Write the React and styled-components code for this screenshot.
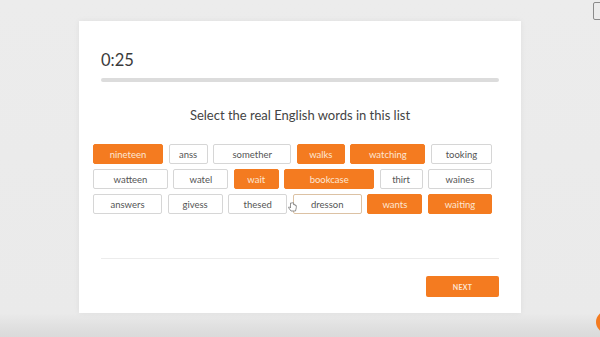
import React from 'react'
import styled, { createGlobalStyle } from 'styled-components'

const GlobalStyle = createGlobalStyle`
  html, body {
    margin: 0;
    padding: 0;
    background: #ebebeb;
  }
  * {
    box-sizing: border-box;
  }
`

const ORANGE = '#f47b20'

const PageStyle = styled.div`
  position: relative;
  width: 600px;
  height: 337px;
  overflow: hidden;
  display: flex;
  flex-direction: column;
  align-items: center;
  padding-top: 21px;
  font-family: Lato, 'Open Sans', sans-serif;
  background: linear-gradient(to bottom, #ececec 0%, #eaeaea 93%, #e0e0e0 97%, #dadada 100%);
`

const CardStyle = styled.div`
  width: 442px;
  height: 292px;
  background: #fff;
  box-shadow: 0 0 6px rgba(0, 0, 0, 0.06);
  padding: 0 22px;
  display: flex;
  flex-direction: column;
`

const TimerStyle = styled.div`
  margin-top: 29px;
  font-size: 16.5px;
  line-height: 20px;
  color: #3a3a3a;
`

const ProgressStyle = styled.div`
  margin-top: 8px;
  height: 4px;
  border-radius: 2px;
  background: #dcdcdc;
`

const TitleStyle = styled.div`
  margin-top: 24px;
  font-size: 13px;
  line-height: 18px;
  color: #444;
  text-align: center;
`

const WordGridStyle = styled.div`
  position: relative;
  margin: 20px 7px 0 -8px;
  display: flex;
  flex-direction: column;
  gap: 5px;
`

const WordRowStyle = styled.div`
  display: flex;
  justify-content: space-between;
`

const ChipStyle = styled.div`
  width: ${({ $w }) => $w}px;
  height: 20px;
  border-radius: 2px;
  display: flex;
  align-items: center;
  justify-content: center;
  font-size: 9.5px;
  background: ${({ $on }) => ($on ? ORANGE : '#fff')};
  color: ${({ $on }) => ($on ? '#fde6d4' : '#555')};
  border: 1px solid ${({ $on, $hover }) => ($on ? ORANGE : $hover ? '#dcc2a4' : '#d6d6d6')};
`

const CursorStyle = styled.svg`
  position: absolute;
  left: 195px;
  top: 58px;
`

const DividerStyle = styled.div`
  margin-top: 44px;
  height: 1px;
  background: #ececec;
`

const NextButtonStyle = styled.div`
  margin-top: 17px;
  align-self: flex-end;
  width: 73px;
  height: 21px;
  border-radius: 2px;
  background: ${ORANGE};
  color: #fde6d4;
  font-size: 7px;
  font-weight: 700;
  letter-spacing: 0.3px;
  display: flex;
  align-items: center;
  justify-content: center;
`

const CornerBoxStyle = styled.div`
  position: absolute;
  left: 593px;
  top: 2px;
  width: 16px;
  height: 18px;
  border: 1px solid #8a8a8a;
  border-radius: 2px;
`

const CornerDotStyle = styled.div`
  position: absolute;
  left: 596px;
  top: 311px;
  width: 22px;
  height: 22px;
  border-radius: 50%;
  background: ${ORANGE};
`

const rows = [
  [
    ['nineteen', 70, true],
    ['anss', 39],
    ['somether', 78],
    ['walks', 48, true],
    ['watching', 75, true],
    ['tooking', 61],
  ],
  [
    ['watteen', 75],
    ['watel', 55],
    ['wait', 45, true],
    ['bookcase', 90, true],
    ['thirt', 43],
    ['waines', 64],
  ],
  [
    ['answers', 69],
    ['givess', 55],
    ['thesed', 59],
    ['dresson', 69, false, true],
    ['wants', 55, true],
    ['waiting', 64, true],
  ],
]

export default function App() {
  return (
    <>
      <GlobalStyle />
      <PageStyle>
        <CardStyle>
          <TimerStyle>0:25</TimerStyle>
          <ProgressStyle />
          <TitleStyle>Select the real English words in this list</TitleStyle>
          <WordGridStyle>
            {rows.map((row, i) => (
              <WordRowStyle key={i}>
                {row.map(([word, w, on, hover]) => (
                  <ChipStyle key={word} $w={w} $on={on} $hover={hover}>
                    {word}
                  </ChipStyle>
                ))}
              </WordRowStyle>
            ))}
            <CursorStyle width="9" height="10" viewBox="0 0 9 10">
              <path
                d="M2.5 1 v5 l-1 -1 c-.6 -.5 -1.4 .2 -.9 .8 l2.4 3.2 h4.5 l.8 -3.3 v-2 c0-.6 -.9 -.6 -.9 0 v-.6 c0-.6 -.9 -.6 -.9 0 v-.4 c0-.6 -.9 -.6 -.9 0 V1 c0-.6 -1.1 -.6 -1.1 0z"
                fill="#fff"
                stroke="#777"
                strokeWidth="0.8"
              />
            </CursorStyle>
          </WordGridStyle>
          <DividerStyle />
          <NextButtonStyle>NEXT</NextButtonStyle>
        </CardStyle>
        <CornerBoxStyle />
        <CornerDotStyle />
      </PageStyle>
    </>
  )
}
